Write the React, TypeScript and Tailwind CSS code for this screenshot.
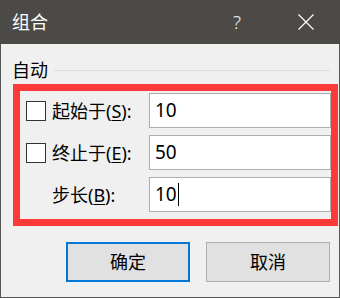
import React from "react";

const font = { fontFamily: '"Segoe UI", "Noto Sans", "Noto Sans CJK SC", sans-serif' };

function Row({ label, hotkey, value, check, caret }: { label: string; hotkey: string; value: string; check?: boolean; caret?: boolean }) {
  return (
    <div className="flex items-center h-[35px]">
      <div className="w-[123px] flex items-center">
        {check ? (
          <div className="w-[20px] h-[20px] border border-[#333] bg-white shrink-0" />
        ) : (
          <div className="w-[20px] h-[20px] shrink-0" />
        )}
        <span className="ml-[6px] text-[18px] leading-none text-black">
          {label}(<span className="underline underline-offset-2">{hotkey}</span>):
        </span>
      </div>
      <div className="flex-1 h-[35px] border border-[#adadad] bg-white flex items-center pl-[5px] text-[19px] text-black">
        <span className="leading-none">{value}</span>
        {caret && <div className="w-px h-[23px] bg-black ml-px" />}
      </div>
    </div>
  );
}

export default function App() {
  return (
    <div className="w-[340px] h-[298px] flex flex-col select-none" style={font}>
      {/* title bar */}
      <div className="h-[44px] bg-[#4b4a47] flex items-center pl-[12px] text-white text-[18px]">
        <span className="flex-1">组合</span>
        <span className="text-[19px] font-light mr-[57px] text-[#f2f2f2]">?</span>
        <svg width="16" height="16" viewBox="0 0 16 16" className="mr-[26px]">
          <path d="M0.5 0.5 L15.5 15.5 M15.5 0.5 L0.5 15.5" stroke="#ffffff" strokeWidth="1.2" />
        </svg>
      </div>

      {/* body */}
      <div className="flex-1 bg-[#f0f0f0] border-x border-b border-[#555] pl-[11px] pr-[1px] flex flex-col">
        <div className="mt-[12px] h-[28px] flex items-center">
          <span className="text-[18px] text-black leading-none">自动</span>
          <div className="flex-1 h-px bg-[#dcdcdc] ml-[6px] mr-[8px]" />
        </div>

        <div className="ml-[1px] border-[7px] border-[#fd3a3a] pt-[2px] pb-[7px] pl-[6px] flex flex-col gap-[7px]">
          <Row label="起始于" hotkey="S" value="10" check />
          <Row label="终止于" hotkey="E" value="50" check />
          <Row label="步长" hotkey="B" value="10" caret />
        </div>

        <div className="mt-[16px] flex justify-end gap-[16px] mr-[8px]">
          <button className="w-[124px] h-[40px] border-2 border-[#0078d7] bg-[#e1e1e1] text-[18px] text-black">确定</button>
          <button className="w-[124px] h-[40px] border border-[#adadad] bg-[#e1e1e1] text-[18px] text-black">取消</button>
        </div>
      </div>
    </div>
  );
}
